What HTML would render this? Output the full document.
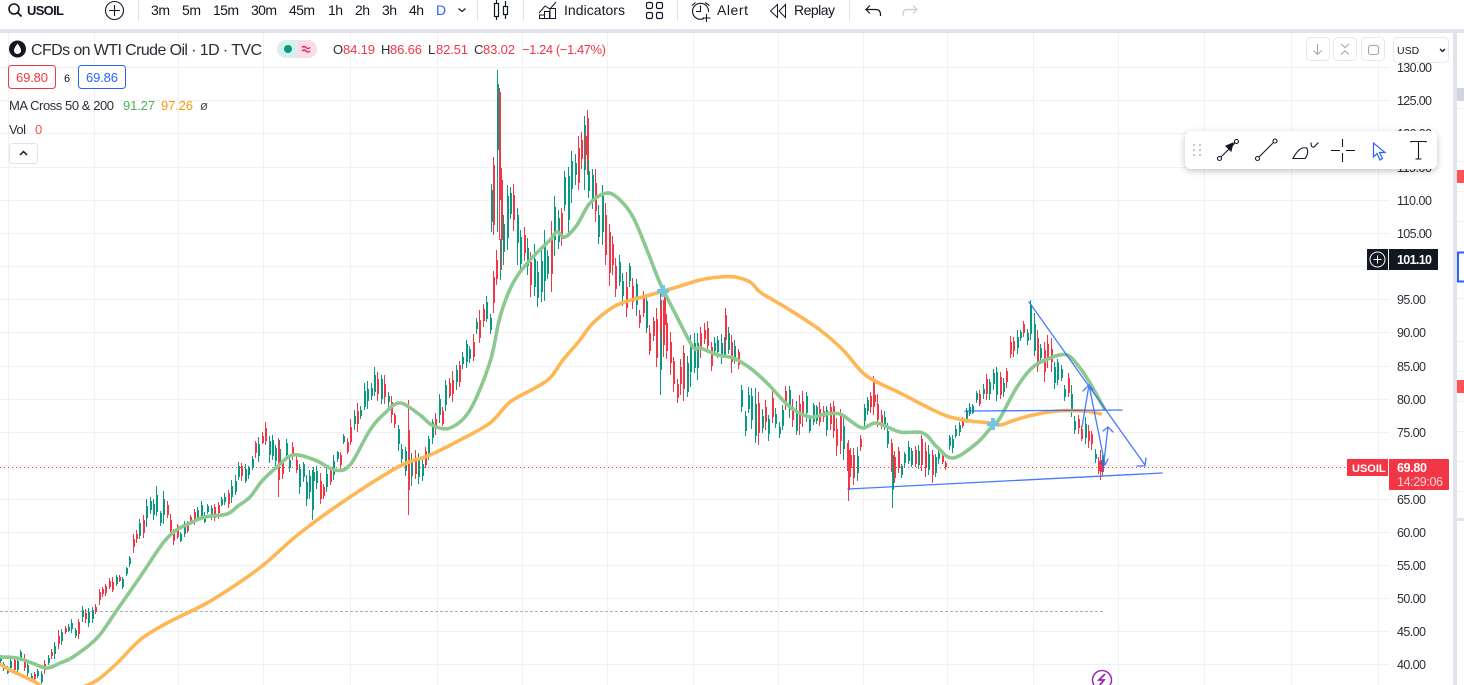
<!DOCTYPE html>
<html><head><meta charset="utf-8"><title>USOIL</title>
<style>
html,body{margin:0;padding:0;width:1464px;height:685px;overflow:hidden;background:#fff}
svg{display:block}
text{font-family:"Liberation Sans",sans-serif;font-size:13px;fill:#131722}
.t{font-size:14px}
.p{font-size:12.5px;fill:#2a2e39}
.r{fill:#f23645}
</style></head><body>
<svg xmlns="http://www.w3.org/2000/svg" width="1464" height="685" viewBox="0 0 1464 685">
<rect width="1464" height="685" fill="#fff"/>
<!-- grid -->
<g stroke="#f0f1f4" stroke-width="1" shape-rendering="crispEdges">
<path d="M0 67.5H1389M0 100.5H1389M0 133.5H1389M0 167.5H1389M0 200.5H1389M0 233.5H1389M0 266.5H1389M0 299.5H1389M0 332.5H1389M0 366.5H1389M0 399.5H1389M0 432.5H1389M0 465.5H1389M0 499.5H1389M0 532.5H1389M0 565.5H1389M0 598.5H1389M0 631.5H1389M0 664.5H1389"/>
<path d="M8.5 33V685M94.5 33V685M178.5 33V685M263.5 33V685M350.5 33V685M437.5 33V685M522.5 33V685M607.5 33V685M693.5 33V685M778.5 33V685M863.5 33V685M947.5 33V685M1033.5 33V685M1118.5 33V685M1204.5 33V685M1291.5 33V685M1378.5 33V685"/>
</g>
<path d="M0 611.5H1103" stroke="#a9b0ad" stroke-width="1" stroke-dasharray="3 2" shape-rendering="crispEdges"/>
<path d="M0 467.5H1345" stroke="#f23645" stroke-width="1" stroke-dasharray="1 3" shape-rendering="crispEdges"/>
<g id="candles" shape-rendering="crispEdges"></g>
<!-- MAs -->
<polyline class="ma" fill="none" stroke="#ffb655" stroke-width="3.6" stroke-linejoin="round" points="0,664 10,670 25,677 37,683 50,692 88,685 113,667 140,640 167,623 207,603 243,580 267,562 300,533 350,497 400,466 430,455 460,440 490,423 510,402 535,388 550,378 563,360 580,340 593,323 617,305 650,295 677,287 700,280 720,277 735,277 750,282 760,292 773,300 790,310 820,330 843,350 860,370 873,380 900,393 933,410 950,417 970,421 990,423 1000,425 1015,420 1033,415 1057,411 1083,411 1102,414"/>
<polyline class="ma" fill="none" stroke="#8cc98f" stroke-width="3.6" stroke-linejoin="round" points="0,657 17,658 32,663 47,668 60,663 73,657 97,638 117,610 140,577 150,562 163,543 175,531 190,523 205,517 227,514 238,506 250,497 262,481 277,467 293,455 315,460 335,470 350,465 370,430 385,413 400,403 420,415 432,425 450,428 470,410 490,362 500,317 513,283 530,260 550,240 557,232 565,237 577,225 590,203 607,193 620,200 633,217 647,250 660,283 677,317 693,347 700,348 718,355 733,358 750,368 767,383 790,407 810,417 825,414 840,414 852,422 863,428 877,423 900,432 923,433 937,447 953,458 977,443 993,425 1000,418 1017,387 1033,367 1050,358 1067,355 1080,368 1090,383 1105,410"/>
<!-- cross stars -->
<path d="M663 285V297M657 291H669M993 418V430M987 424H999" stroke="#76c5e6" stroke-width="4" shape-rendering="crispEdges"/>
<!-- drawings -->
<g fill="none" stroke="#2962ff" stroke-width="1.3" opacity=".85" stroke-linecap="round">
<path d="M1029 302L1145 465M1137 466L1145 466L1146 458"/>
<path d="M965 411L1122 410"/>
<path d="M848 489L1162 473"/>
<path d="M1082 427L1089 385L1105 465M1083 391L1089 385L1093 390M1100 463L1105 465L1108 459"/>
<path d="M1103 470L1108 427M1103 431L1108 427L1113 432"/>
</g>
<circle cx="1102" cy="680" r="9.5" fill="none" stroke="#9c27b0" stroke-width="1.5"/>
<path d="M1105 674L1099 680H1104L1099 686" fill="none" stroke="#9c27b0" stroke-width="1.8"/>

<!-- separators/frames -->
<rect x="0" y="0" width="1464" height="29" fill="#fff"/>
<rect x="0" y="29" width="1464" height="4" fill="#e0e3eb"/>
<rect x="1453" y="29" width="4" height="656" fill="#e0e3eb"/>
<rect x="1457" y="33" width="7" height="652" fill="#fff"/>
<rect x="1457" y="88" width="7" height="13" fill="#d1d4dc"/>
<rect x="1457" y="170" width="7" height="13" fill="#ff5252"/>
<rect x="1457" y="380" width="7" height="13" fill="#ff5252"/>
<rect x="1458" y="252.5" width="8" height="29" fill="none" stroke="#2962ff" stroke-width="2"/>
<path d="M1457 108.5H1464M1457 161.5H1464M1457 191.5H1464M1457 221.5H1464M1457 298.5H1464M1457 341.5H1464M1457 371.5H1464M1457 401.5H1464M1457 431.5H1464M1457 461.5H1464M1457 491.5H1464" stroke="#eef0f3"/>
<rect x="1457" y="518" width="7" height="3" fill="#e0e3eb"/>

<!-- toolbar -->
<circle cx="14" cy="9" r="5" fill="none" stroke="#131722" stroke-width="1.6"/>
<path d="M17.5 12.5L21.5 16.5" stroke="#131722" stroke-width="1.8"/>
<text x="27" y="15" style="font-weight:700;font-size:13px" textLength="37">USOIL</text>
<circle cx="114.5" cy="10.5" r="9" fill="none" stroke="#131722" stroke-width="1.1"/>
<path d="M114.5 5V16M109 10.5H120" stroke="#131722" stroke-width="1.1"/>
<path d="M138.5 0V21M477.5 0V21M523.5 0V21M677.5 0V21M849.5 0V21" stroke="#e0e3eb" shape-rendering="crispEdges"/>
<g class="x">
<text class="t" x="151" y="15" textLength="19">3m</text>
<text class="t" x="182" y="15" textLength="19">5m</text>
<text class="t" x="213" y="15" textLength="26">15m</text>
<text class="t" x="251" y="15" textLength="26">30m</text>
<text class="t" x="289" y="15" textLength="26">45m</text>
<text class="t" x="328" y="15" textLength="15">1h</text>
<text class="t" x="355" y="15" textLength="15">2h</text>
<text class="t" x="382" y="15" textLength="15">3h</text>
<text class="t" x="409" y="15" textLength="15">4h</text>
<text class="t" x="436" y="15" style="fill:#2962ff" textLength="9">D</text>
</g>
<path d="M458.5 8.5L462 11.5L465.5 8.5" fill="none" stroke="#131722" stroke-width="1.2"/>
<g fill="none" stroke="#131722" stroke-width="1.2">
<rect x="494.5" y="3.5" width="4" height="13"/><path d="M496.5 0V3M496.5 17V20"/>
<rect x="503.5" y="6.5" width="4" height="8"/><path d="M505.5 1V6M505.5 15V19"/>
<path d="M539 13L545 6L550 9L556 2" stroke-width="1"/>
<path d="M539.5 18.5h5v-3.5h-5zM544.5 18.5h5v-7h-5zM550 18.5h5.5v-10h-5.5z" stroke-width="1"/>
<rect x="646.5" y="2.5" width="6" height="6" rx="1.5"/><rect x="656.5" y="2.5" width="6" height="6" rx="1.5"/>
<rect x="646.5" y="12.5" width="6" height="6" rx="1.5"/><rect x="656.5" y="12.5" width="6" height="6" rx="1.5"/>
<path d="M704 18.5A8 8 0 1 1 708.5 12M700.5 5.5V11.5H696M692 5.5L695.5 2.5M705 2.5L709.5 5.5M706.5 14V22M702.5 18H710.5" stroke-width="1.1"/>
<path d="M777.5 4.5L770.5 11L777.5 17.5ZM785.5 4.5L779 11L785.5 17.5Z" stroke-width="1"/>
<path d="M866 9.5H876Q880.5 9.5 880.5 15V16M870 5.5L866 9.5L870 13.5"/>
<path d="M917 9.5H907Q903 9.5 903 15V16M913 5.5L917 9.5L913 13.5" stroke="#c9cbd1"/>
</g>
<text class="t" x="564" y="15" textLength="61">Indicators</text>
<text class="t" x="717" y="15" textLength="31">Alert</text>
<text class="t" x="794" y="15" textLength="41">Replay</text>

<!-- legend -->
<circle cx="17.5" cy="49" r="8.5" fill="#131722"/>
<path d="M17.5 43.5C15 47 14 48.5 14 50.5A3.5 3.5 0 0 0 21 50.5C21 48.5 20 47 17.5 43.5Z" fill="#fff"/>
<text x="31" y="55" style="font-size:16px;fill:#2a2e39" textLength="231">CFDs on WTI Crude Oil · 1D · TVC</text>
<path d="M297 40H286A9 9 0 0 0 286 58H297Z" fill="#d6f0ea"/>
<path d="M297 40H308A9 9 0 0 1 308 58H297Z" fill="#fbdbe5"/>
<circle cx="288" cy="49" r="4" fill="#089981"/>
<path d="M302 47.5q2-2 4 0t4 0M302 51q2-2 4 0t4 0" fill="none" stroke="#e91e63" stroke-width="1.3"/>
<text x="333" y="54" style="fill:#2a2e39" textLength="10">O</text><text class="r" x="343" y="54" textLength="32">84.19</text>
<text x="381" y="54" style="fill:#2a2e39" textLength="9">H</text><text class="r" x="390" y="54" textLength="32">86.66</text>
<text x="428" y="54" style="fill:#2a2e39" textLength="8">L</text><text class="r" x="436" y="54" textLength="32">82.51</text>
<text x="474" y="54" style="fill:#2a2e39" textLength="9">C</text><text class="r" x="483" y="54" textLength="32">83.02</text>
<text class="r" x="522" y="54" textLength="84">−1.24 (−1.47%)</text>
<rect x="8.5" y="65.5" width="47" height="23" rx="3" fill="#fff" stroke="#f23645"/>
<text class="r" x="16" y="82" textLength="32">69.80</text>
<text x="64" y="82" style="font-size:11px" textLength="5">6</text>
<rect x="78.5" y="65.5" width="47" height="23" rx="3" fill="#fff" stroke="#2962ff"/>
<text x="86" y="82" style="fill:#2962ff" textLength="32">69.86</text>
<text x="9" y="110" style="fill:#2a2e39" textLength="105">MA Cross 50 &amp; 200</text>
<text x="123" y="110" style="fill:#4caf50" textLength="32">91.27</text>
<text x="161" y="110" style="fill:#ff9800" textLength="32">97.26</text>
<text x="200" y="110" style="fill:#555" textLength="7">ø</text>
<text x="9" y="134" style="fill:#2a2e39" textLength="17">Vol</text>
<text x="35" y="134" style="fill:#ef5350" textLength="6">0</text>
<rect x="9.5" y="143.5" width="28" height="20" rx="3" fill="#fff" stroke="#e0e3eb"/>
<path d="M20 155L23.5 151.5L27 155" fill="none" stroke="#131722" stroke-width="1.5"/>

<!-- price scale -->
<g>
<text class="p" x="1397" y="72" textLength="35">130.00</text>
<text class="p" x="1397" y="105" textLength="35">125.00</text>
<text class="p" x="1397" y="138" textLength="35">120.00</text>
<text class="p" x="1397" y="172" textLength="35">115.00</text>
<text class="p" x="1397" y="205" textLength="35">110.00</text>
<text class="p" x="1397" y="238" textLength="35">105.00</text>
<text class="p" x="1397" y="304" textLength="29">95.00</text>
<text class="p" x="1397" y="337" textLength="29">90.00</text>
<text class="p" x="1397" y="371" textLength="29">85.00</text>
<text class="p" x="1397" y="404" textLength="29">80.00</text>
<text class="p" x="1397" y="437" textLength="29">75.00</text>
<text class="p" x="1397" y="504" textLength="29">65.00</text>
<text class="p" x="1397" y="537" textLength="29">60.00</text>
<text class="p" x="1397" y="570" textLength="29">55.00</text>
<text class="p" x="1397" y="603" textLength="29">50.00</text>
<text class="p" x="1397" y="636" textLength="29">45.00</text>
<text class="p" x="1397" y="669" textLength="29">40.00</text>
</g>
<rect x="1347" y="459" width="41" height="17" fill="#f23645"/>
<text x="1352" y="472" style="font-size:11px;fill:#fff;font-weight:700">USOIL</text>
<rect x="1389" y="459" width="60" height="31" rx="1" fill="#f23645"/>
<text x="1397" y="472" style="font-size:12.5px;fill:#fff;font-weight:700" textLength="30">69.80</text>
<text x="1397" y="486" style="font-size:12.5px;fill:#fbd0d5" textLength="46">14:29:06</text>
<rect x="1367" y="249" width="21" height="21" fill="#131722"/>
<rect x="1389" y="249" width="49" height="21" fill="#131722"/>
<circle cx="1377.5" cy="259.5" r="7.5" fill="none" stroke="#fff"/>
<path d="M1377.5 255.5V263.5M1373.5 259.5H1381.5" stroke="#fff"/>
<text x="1397" y="264" style="font-size:12.5px;fill:#fff;font-weight:700" textLength="35">101.10</text>

<!-- top-right buttons -->
<g fill="#fff" stroke="#e6e8ee">
<rect x="1306.5" y="37.5" width="23" height="23" rx="4"/>
<rect x="1333.5" y="37.5" width="23" height="23" rx="4"/>
<rect x="1361.5" y="37.5" width="23" height="23" rx="4"/>
<rect x="1393.5" y="37.5" width="55" height="25" rx="4"/>
</g>
<g fill="none" stroke="#a3a6af" stroke-width="1.1">
<path d="M1317.5 44V54M1313.5 50.5L1317.5 54.5L1321.5 50.5"/>
<path d="M1341 44L1345 47.5L1349 44M1341 54.5L1345 51L1349 54.5"/>
<rect x="1368.5" y="45.5" width="10" height="9" rx="2"/>
</g>
<text x="1397" y="54" style="font-size:10.5px">USD</text>
<path d="M1440 49L1442.5 51.5L1445 49" fill="none" stroke="#131722" stroke-width="1.3"/>

<!-- floating toolbar -->
<defs><filter id="sh" x="-10%" y="-40%" width="120%" height="190%"><feDropShadow dx="0" dy="2" stdDeviation="3.5" flood-color="#000" flood-opacity=".24"/></filter></defs>
<rect x="1185" y="131" width="252" height="38" rx="6" fill="#fff" filter="url(#sh)"/>
<g fill="#c4c7cf">
<rect x="1193" y="144" width="2" height="2"/><rect x="1199" y="144" width="2" height="2"/>
<rect x="1193" y="149" width="2" height="2"/><rect x="1199" y="149" width="2" height="2"/>
<rect x="1193" y="154" width="2" height="2"/><rect x="1199" y="154" width="2" height="2"/>
</g>
<g fill="none" stroke="#131722" stroke-width="1.1">
<circle cx="1219.5" cy="158.5" r="2"/><circle cx="1236.5" cy="141.5" r="2"/>
<path d="M1221 157L1235 143"/>
<path d="M1233 143L1226 146L1231 151Z" fill="#131722"/>
<circle cx="1257.5" cy="158.5" r="2"/><circle cx="1275" cy="141" r="2"/>
<path d="M1259 157L1273.5 142.5"/>
<path d="M1293 158.5H1305Q1309 154 1307 148Q1302 147 1299 150Q1295 154 1293 158.5Z"/>
<path d="M1311 142.5Q1311 148 1314 147L1318.5 142.5"/>
<path d="M1331 150.5H1340M1346 150.5H1355M1342.5 139V147M1342.5 153V162"/>
<path d="M1411 142.5V141.5H1426V142.5M1418.5 141.5V159M1415.5 159H1421.5"/>
</g>
<path d="M1373.5 143V157L1377 153.5L1380 160L1382.5 158.5L1379.5 152.5H1385Z" fill="none" stroke="#2962ff" stroke-width="1.2"/>
</svg>
<script>
(function(){
var E=[[0,655,680],[20,650,675],[35,665,685],[45,653,685],[50,645,670],[60,623,650],[70,620,640],[83,603,638],[95,600,622],[100,577,605],[120,575,592],[125,565,590],[130,543,570],[140,510,545],[155,480,520],[165,490,540],[175,520,550],[190,510,530],[205,495,525],[220,490,520],[235,465,500],[250,445,480],[265,422,455],[278,440,492],[290,438,470],[300,450,498],[312,465,515],[325,465,500],[340,440,470],[355,395,440],[370,365,405],[385,370,410],[395,400,440],[408,430,500],[420,445,490],[430,420,460],[445,375,420],[460,345,385],[475,310,360],[490,290,335],[495,240,330],[505,170,270],[510,170,240],[518,205,265],[525,230,300],[535,220,310],[545,205,300],[555,195,290],[565,165,260],[575,140,240],[585,112,190],[590,140,205],[597,175,250],[607,193,285],[615,235,300],[625,255,320],[635,270,330],[645,290,350],[660,285,375],[670,330,395],[688,340,420],[700,310,380],[715,330,380],[725,310,375],[735,340,400],[745,360,440],[758,390,465],[770,390,450],[785,385,430],[800,385,445],[815,395,425],[830,395,445],[840,405,470],[848,430,498],[858,430,490],[865,390,420],[875,375,420],[885,410,460],[892,440,485],[905,440,480],[920,430,480],[935,435,485],[945,445,470],[955,420,450],[965,410,430],[975,380,410],[985,370,405],[1000,365,415],[1010,335,370],[1020,320,350],[1030,300,345],[1037,320,390],[1050,335,390],[1060,360,395],[1068,370,425],[1078,405,450],[1090,415,450],[1098,455,478],[1103,455,478]];
function env(x){for(var i=1;i<E.length;i++){if(x<=E[i][0]){var a=E[i-1],b=E[i],t=(x-a[0])/(b[0]-a[0]);return[a[1]+(b[1]-a[1])*t,a[2]+(b[2]-a[2])*t];}}return[E[E.length-1][1],E[E.length-1][2]];}
var s=12345;function R(){s=(s*1664525+1013904223)%4294967296;return s/4294967296;}
var gw='',gb='',rw='',rb='';
function add(x,hi,lo,up,bt,bb){var w='M'+(x+.5)+' '+Math.round(hi)+'V'+Math.round(lo);var b='M'+x+' '+Math.round(bt)+'h2V'+Math.round(bb)+'h-2z';if(up){gw+=w;gb+=b;}else{rw+=w;rb+=b;}}
for(var x=0;x<=1103;x+=3.4){var X=Math.round(x),e=env(X),h=e[1]-e[0],len=h*(.3+R()*.45),off=(h-len)*R(),hi=e[0]+off,lo=hi+len,bt=hi+len*(.12+R()*.2),bb=lo-len*(.12+R()*.2);add(X,hi,lo,R()>.48,bt,bb);}
[[497,70,232,1,84,150],[499,88,240,0,92,200],[493,157,235,0,165,225],[491,184,232,1,190,222],[517,208,265,1,215,240],[501,168,270,0,180,240],[587,110,175,0,118,160],[584,116,190,1,125,170],[408,400,515,0,430,490],[312,470,520,1,480,510],[848,440,501,0,450,490],[892,445,508,1,455,490],[1100,450,480,0,460,472],[1102,455,476,1,458,470],[1030,300,340,1,305,330],[664,285,345,0,290,325],[725,308,350,0,315,340],[873,376,415,0,380,405],[660,290,395,1,300,370],[278,438,497,0,445,480]].forEach(function(c){add(c[0],c[1],c[2],c[3],c[4],c[5]);});
var NS='http://www.w3.org/2000/svg',G=document.getElementById('candles');
[[gw,gb,'#089981'],[rw,rb,'#f23645']].forEach(function(p){var a=document.createElementNS(NS,'path');a.setAttribute('d',p[0]);a.setAttribute('stroke',p[2]);a.setAttribute('fill','none');var c=document.createElementNS(NS,'path');c.setAttribute('d',p[1]);c.setAttribute('fill',p[2]);G.appendChild(a);G.appendChild(c);});
/* smooth moving-average lines */
Array.prototype.forEach.call(document.querySelectorAll('polyline.ma'),function(l){
var pts=l.getAttribute('points').trim().split(/\s+/).map(function(q){return q.split(',').map(Number);});
var d='M'+pts[0][0]+' '+pts[0][1];
for(var i=0;i<pts.length-1;i++){var p0=pts[Math.max(i-1,0)],p1=pts[i],p2=pts[i+1],p3=pts[Math.min(i+2,pts.length-1)];
d+='C'+(p1[0]+(p2[0]-p0[0])/6).toFixed(1)+' '+(p1[1]+(p2[1]-p0[1])/6).toFixed(1)+' '+(p2[0]-(p3[0]-p1[0])/6).toFixed(1)+' '+(p2[1]-(p3[1]-p1[1])/6).toFixed(1)+' '+p2[0]+' '+p2[1];}
var n=document.createElementNS(NS,'path');n.setAttribute('d',d);n.setAttribute('fill','none');n.setAttribute('stroke',l.getAttribute('stroke'));n.setAttribute('stroke-width',l.getAttribute('stroke-width'));n.setAttribute('stroke-linejoin','round');l.parentNode.replaceChild(n,l);
});
})();
</script>
</body></html>
